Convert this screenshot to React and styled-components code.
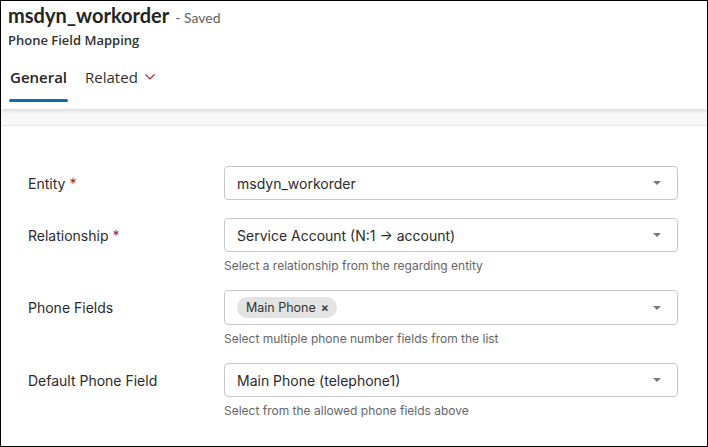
import styled, { createGlobalStyle } from "styled-components";

const GlobalStyle = createGlobalStyle`
  html, body {
    margin: 0;
    padding: 0;
    background: #fff;
  }
  * {
    box-sizing: border-box;
  }
`;

const Frame = styled.div`
  width: 708px;
  height: 447px;
  border: 1px solid #000;
  display: flex;
  flex-direction: column;
  overflow: hidden;
  background: #fff;
`;

const Header = styled.header`
  position: relative;
  z-index: 1;
  background: #fff;
  padding: 0 7px;
  height: 108px;
  box-shadow: 0 2px 4px rgba(0, 0, 0, 0.12);
  font-family: Lato, "Open Sans", sans-serif;
`;

const TitleLine = styled.div`
  display: flex;
  align-items: baseline;
  gap: 6px;
  height: 30px;
`;

const Title = styled.h1`
  margin: 0;
  font-size: 20px;
  font-weight: 700;
  color: #242424;
  line-height: 29px;
`;

const Status = styled.span`
  font-size: 14px;
  color: #616161;
`;

const Subtitle = styled.div`
  font-family: "Open Sans", sans-serif;
  font-size: 13px;
  font-weight: 600;
  color: #323130;
  line-height: 18px;
`;

const Tabs = styled.nav`
  display: flex;
  gap: 14px;
  margin-top: 18px;
`;

const Tab = styled.div`
  display: flex;
  align-items: center;
  gap: 5px;
  line-height: 20px;
  padding: 0 2px 15px;
  font-family: "Open Sans", sans-serif;
  font-size: 15px;
  font-weight: ${(p) => (p.$active ? 600 : 400)};
  color: ${(p) => (p.$active ? "#242424" : "#323130")};
  position: relative;

  &::after {
    content: "";
    display: ${(p) => (p.$active ? "block" : "none")};
    position: absolute;
    left: 1px;
    right: 1px;
    bottom: 0;
    height: 3px;
    border-radius: 2px;
    background: #0f6cbd;
  }
`;

const Band = styled.div`
  height: 17px;
  background: #f8f8f8;
  border-bottom: 1px solid #e6e6e6;
`;

const Form = styled.div`
  flex: 1;
  padding: 40px 29px 0 27px;
  font-family: Inter, "Liberation Sans", sans-serif;
  display: flex;
  flex-direction: column;
`;

const Row = styled.div`
  display: grid;
  grid-template-columns: 196px 1fr;
  margin-bottom: 18px;
`;

const Label = styled.div`
  height: 34px;
  display: flex;
  align-items: center;
  font-size: 14px;
  color: #2b2b2b;
`;

const Required = styled.span`
  color: #a4262c;
  margin-left: 4px;
`;

const Field = styled.div`
  display: flex;
  flex-direction: column;
`;

const Select = styled.div`
  height: ${(p) => (p.$tall ? "35px" : "34px")};
  border: 1px solid #c8c8c8;
  border-radius: 4px;
  display: flex;
  align-items: center;
  padding: 0 16px 0 12px;
  font-size: 14px;
  color: #2b2b2b;
`;

const Value = styled.span`
  flex: 1;
`;

const Caret = styled.span`
  width: 0;
  height: 0;
  border-left: 4px solid transparent;
  border-right: 4px solid transparent;
  border-top: 4px solid #777;
`;

const Chips = styled.div`
  flex: 1;
  display: flex;
  gap: 4px;
`;

const Chip = styled.span`
  display: inline-flex;
  align-items: center;
  gap: 5px;
  height: 21px;
  padding: 0 8px 0 9px;
  border-radius: 11px;
  background: #e3e3e3;
  font-size: 12.5px;
  color: #333;
`;

const ChipX = styled.span`
  font-size: 12px;
  font-weight: 700;
  color: #444;
`;

const Hint = styled.div`
  margin-top: 6px;
  height: 14px;
  font-size: 12px;
  color: #666;
  line-height: 16px;
`;

const fields = [
  { label: "Entity", required: true, value: "msdyn_workorder" },
  {
    label: "Relationship",
    required: true,
    value: "Service Account (N:1 \u2192 account)",
    hint: "Select a relationship from the regarding entity",
  },
  {
    label: "Phone Fields",
    chips: ["Main Phone"],
    hint: "Select multiple phone number fields from the list",
  },
  {
    label: "Default Phone Field",
    value: "Main Phone (telephone1)",
    hint: "Select from the allowed phone fields above",
  },
];

export default function App() {
  return (
    <>
      <GlobalStyle />
      <Frame>
        <Header>
          <TitleLine>
            <Title>msdyn_workorder</Title>
            <Status>- Saved</Status>
          </TitleLine>
          <Subtitle>Phone Field Mapping</Subtitle>
          <Tabs>
            <Tab $active>General</Tab>
            <Tab>
              Related
              <svg width="14" height="14" viewBox="0 0 14 14">
                <path d="M2.5 4.5 L7 9 L11.5 4.5" fill="none" stroke="#a4262c" strokeWidth="1.2" />
              </svg>
            </Tab>
          </Tabs>
        </Header>
        <Band />
        <Form>
          {fields.map((f) => (
            <Row key={f.label}>
              <Label>
                {f.label}
                {f.required && <Required>*</Required>}
              </Label>
              <Field>
                <Select $tall={!!f.chips}>
                  {f.chips ? (
                    <Chips>
                      {f.chips.map((c) => (
                        <Chip key={c}>
                          {c}
                          <ChipX>×</ChipX>
                        </Chip>
                      ))}
                    </Chips>
                  ) : (
                    <Value>{f.value}</Value>
                  )}
                  <Caret />
                </Select>
                {f.hint && <Hint>{f.hint}</Hint>}
              </Field>
            </Row>
          ))}
        </Form>
      </Frame>
    </>
  );
}
